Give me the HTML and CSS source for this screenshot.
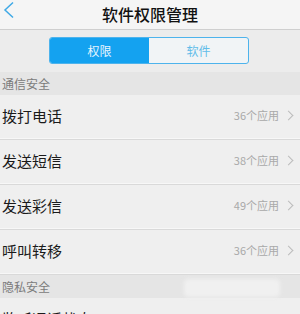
FILE: index.html
```html
<!DOCTYPE html>
<html lang="zh">
<head>
<meta charset="utf-8">
<link rel="stylesheet" href="styles.css">
</head>
<body>
<div class="page">
  <header class="nav">
    <svg class="back" width="16" height="20" viewBox="0 0 16 20"><path d="M13 2.5 L5 10 L13 17.5" fill="none" stroke="#3fa9e6" stroke-width="1.5"/></svg>
    <h1 class="title">软件权限管理</h1>
  </header>
  <div class="seg-wrap">
    <div class="seg">
      <div class="seg-item active">权限</div>
      <div class="seg-item">软件</div>
    </div>
  </div>
  <div class="section">通信安全</div>
  <div class="row"><span class="name">拨打电话</span><span class="count">36个应用</span><span class="chev"></span></div>
  <div class="row"><span class="name">发送短信</span><span class="count">38个应用</span><span class="chev"></span></div>
  <div class="row"><span class="name">发送彩信</span><span class="count">49个应用</span><span class="chev"></span></div>
  <div class="row"><span class="name">呼叫转移</span><span class="count">36个应用</span><span class="chev"></span></div>
  <div class="section">隐私安全<div class="blur"></div></div>
  <div class="row"><span class="name">监听通话状态</span><span class="count"></span></div>
</div>
</body>
</html>
```
FILE: styles.css
```css
* { box-sizing: border-box; margin: 0; padding: 0; }
body { margin: 0; background: #eeeeee; font-family: "Noto Sans CJK SC", "Liberation Sans", sans-serif; overflow: hidden; }
.page { width: 300px; height: 314px; overflow: hidden; }
.nav { height: 30px; background: #f5f5f5; border-bottom: 1px solid #cfcfcf; position: relative; display: flex; align-items: center; justify-content: center; }
.back { position: absolute; left: 0; top: 0; }
.title { font-size: 16px; font-weight: 500; color: #111; line-height: 20px; margin-top: -2px; }
.seg-wrap { height: 42px; background: #ececec; padding: 7px 0 0 49px; }
.seg { width: 200px; height: 27px; display: flex; border: 1px solid #4db3ec; border-radius: 3px; overflow: hidden; background: #f1f4f6; }
.seg-item { flex: 1; display: flex; align-items: center; justify-content: center; font-size: 12px; color: #62bde9; }
.seg-item.active { background: #14a2f0; color: #e6f5ff; }
.section { height: 23px; background: #e5e5e5; font-size: 12px; color: #7b7b7b; padding: 0 0 1px 2px; display: flex; align-items: center; position: relative; }
.blur { position: absolute; left: 184px; top: 4px; width: 96px; height: 18px; background: #f0f0f0; border-radius: 4px; filter: blur(2px); }
.row { height: 45px; background: #efefef; display: flex; align-items: center; padding: 0 6px 4px 2px; border-bottom: 1px solid #d9d9d9; box-shadow: inset 0 -1px 0 #f7f7f7; }
.name { flex: 1; font-size: 15px; color: #1a1a1a; }
.count { font-size: 11px; color: #a9a9a9; margin-right: 6px; }
.chev { width: 7px; height: 7px; border-top: 1px solid #bcbcbc; border-right: 1px solid #bcbcbc; transform: rotate(45deg); margin-right: 2px; }
```
